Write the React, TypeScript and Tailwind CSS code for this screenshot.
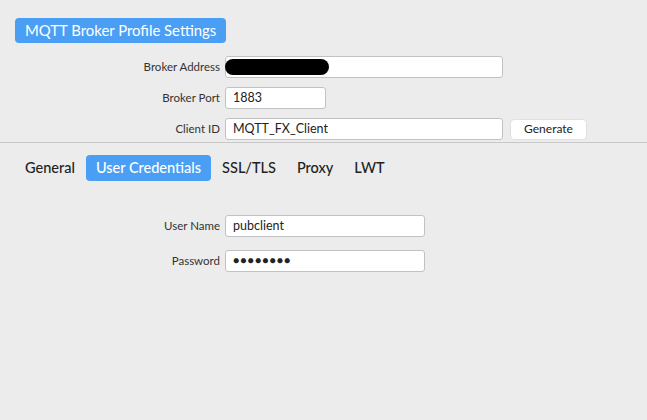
import React from 'react';

const tabs = ['General', 'User Credentials', 'SSL/TLS', 'Proxy', 'LWT'];

function Field({ label, width, children, gap = 'mb-[9px]' }: { label: string; width: string; children?: React.ReactNode; gap?: string }) {
  return (
    <div className={`flex items-center ${gap}`}>
      <div className="w-[225px] pr-[5px] text-right text-[11.5px] text-[#333]">{label}</div>
      <div className={`relative h-[22px] ${width} rounded-[3px] border border-[#c2c2c2] bg-white px-[7px] flex items-center text-[12.5px] text-[#222]`}>
        {children}
      </div>
    </div>
  );
}

export default function App() {
  return (
    <div className="h-[420px] w-[647px] bg-[#ececec] font-['Lato','Open_Sans',sans-serif] overflow-hidden">
      <div className="pt-[18px] pl-[15px]">
        <div className="inline-flex h-[25px] items-center rounded-[4px] bg-[#4a9ff5] px-[10px] text-[14.9px] text-white">
          MQTT Broker Profile Settings
        </div>
      </div>

      <div className="mt-[13px]">
        <Field label="Broker Address" width="w-[278px]">
          <span className="absolute left-[-1px] top-[2px] h-[16px] w-[104px] rounded-full bg-black" />
        </Field>
        <Field label="Broker Port" width="w-[101px]">1883</Field>
        <div className="flex items-center">
          <div className="w-[225px] pr-[5px] text-right text-[11.5px] text-[#333]">Client ID</div>
          <div className="h-[22px] w-[278px] rounded-[3px] border border-[#c2c2c2] bg-white px-[7px] flex items-center text-[12.5px] text-[#222]">
            MQTT_FX_Client
          </div>
          <button className="ml-[7px] h-[21px] w-[77px] rounded-[4px] border border-[#e0e0e0] bg-white text-[12px] text-[#222]">
            Generate
          </button>
        </div>
      </div>

      <div className="mt-[2px] border-t border-[#c8c8c8]" />

      <div className="mt-[12px] flex items-center gap-[1px] pl-[15px]">
        {tabs.map((t) => (
          <div
            key={t}
            className={`flex h-[26px] items-center rounded-[4px] px-[10px] text-[14.5px] font-medium ${
              t === 'User Credentials' ? 'bg-[#4a9ff5] text-white' : 'text-[#222]'
            }`}
          >
            {t}
          </div>
        ))}
      </div>

      <div className="mt-[34px]">
        <Field label="User Name" width="w-[200px]" gap="mb-[13px]">pubclient</Field>
        <Field label="Password" width="w-[200px]">
          <span className="tracking-[1px] text-[10.5px] text-[#222]">●●●●●●●●</span>
        </Field>
      </div>
    </div>
  );
}
